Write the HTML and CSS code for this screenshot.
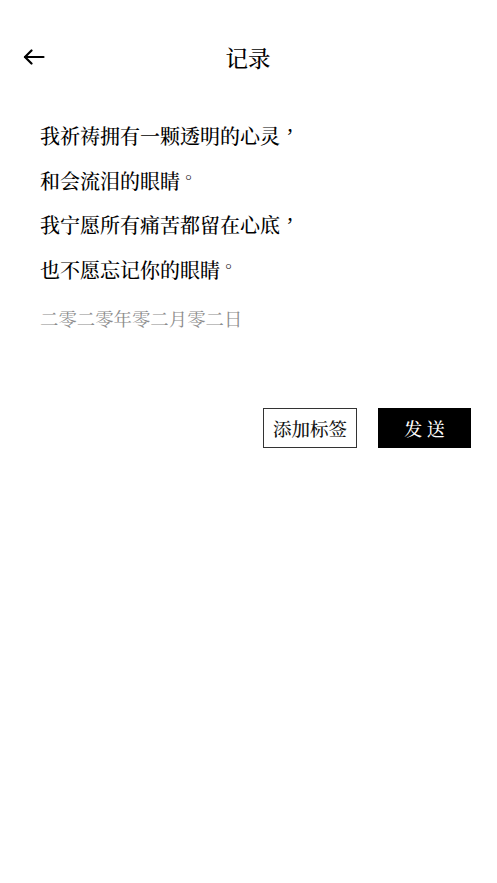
FILE: index.html
```html
<!DOCTYPE html>
<html lang="zh-CN">
<head>
<meta charset="utf-8">
<title>记录</title>
<link rel="stylesheet" href="styles.css">
</head>
<body>
<div class="page">
  <header class="topbar">
    <span class="back">
      <svg width="22" height="16" viewBox="0 0 22 16" fill="none" stroke="#000" stroke-width="2.2" stroke-linecap="round" stroke-linejoin="round">
        <path d="M2 8H20.5"/>
        <path d="M8.5 1.5L2 8L8.5 14.5"/>
      </svg>
    </span>
    <h1 class="title">记录</h1>
    <span class="spacer"></span>
  </header>
  <main class="content">
    <div class="poem">
      <p>我祈祷拥有一颗透明的心灵<span class="punct comma">，</span></p>
      <p>和会流泪的眼睛<span class="punct stop">。</span></p>
      <p>我宁愿所有痛苦都留在心底<span class="punct comma">，</span></p>
      <p>也不愿忘记你的眼睛<span class="punct stop">。</span></p>
    </div>
    <p class="date">二零二零年零二月零二日</p>
    <div class="actions">
      <button class="btn btn-outline">添加标签</button>
      <button class="btn btn-dark">发 送</button>
    </div>
  </main>
</div>
</body>
</html>
```

FILE: styles.css
```css
* { box-sizing: border-box; }
html, body {
  margin: 0;
  padding: 0;
  background: #fff;
}
body {
  font-family: "Noto Serif CJK TC", "Noto Serif CJK SC", "Noto Sans CJK TC", serif;
  color: #000;
}
.page {
  width: 497px;
  min-height: 883px;
}
.topbar {
  display: grid;
  grid-template-columns: 1fr auto 1fr;
  align-items: center;
  height: 44px;
  margin-top: 35px;
  padding: 0 24px 0 23px;
}
.back {
  display: flex;
  align-items: center;
}
.title {
  margin: 0;
  font-size: 22.5px;
  font-weight: 500;
  line-height: 44px;
}
.content {
  padding: 0 26px 0 40px;
  margin-top: 35px;
}
.poem p {
  margin: 0;
  font-size: 20px;
  font-weight: 500;
  line-height: 44.5px;
  white-space: nowrap;
}
.punct {
  display: inline-block;
  width: 1em;
  text-align: center;
  line-height: 1;
}
.punct.comma {
  vertical-align: 0.18em;
}
.punct.stop {
  vertical-align: 0.25em;
  font-size: 0.85em;
}
.date {
  margin: 13px 0 0;
  font-size: 18.4px;
  line-height: 26px;
  color: #8c8c8c;
}
.actions {
  display: flex;
  justify-content: flex-end;
  gap: 21px;
  margin-top: 77px;
}
.btn {
  font-family: inherit;
  height: 40px;
  font-size: 18.5px;
  font-weight: 500;
  line-height: 1;
  padding: 0;
  cursor: pointer;
  display: flex;
  align-items: center;
  justify-content: center;
}
.btn-outline {
  width: 94px;
  background: #fff;
  color: #111;
  border: 1.5px solid #333;
}
.btn-dark {
  width: 93px;
  background: #000;
  color: #fff;
  border: none;
  font-size: 18px;
}
```
